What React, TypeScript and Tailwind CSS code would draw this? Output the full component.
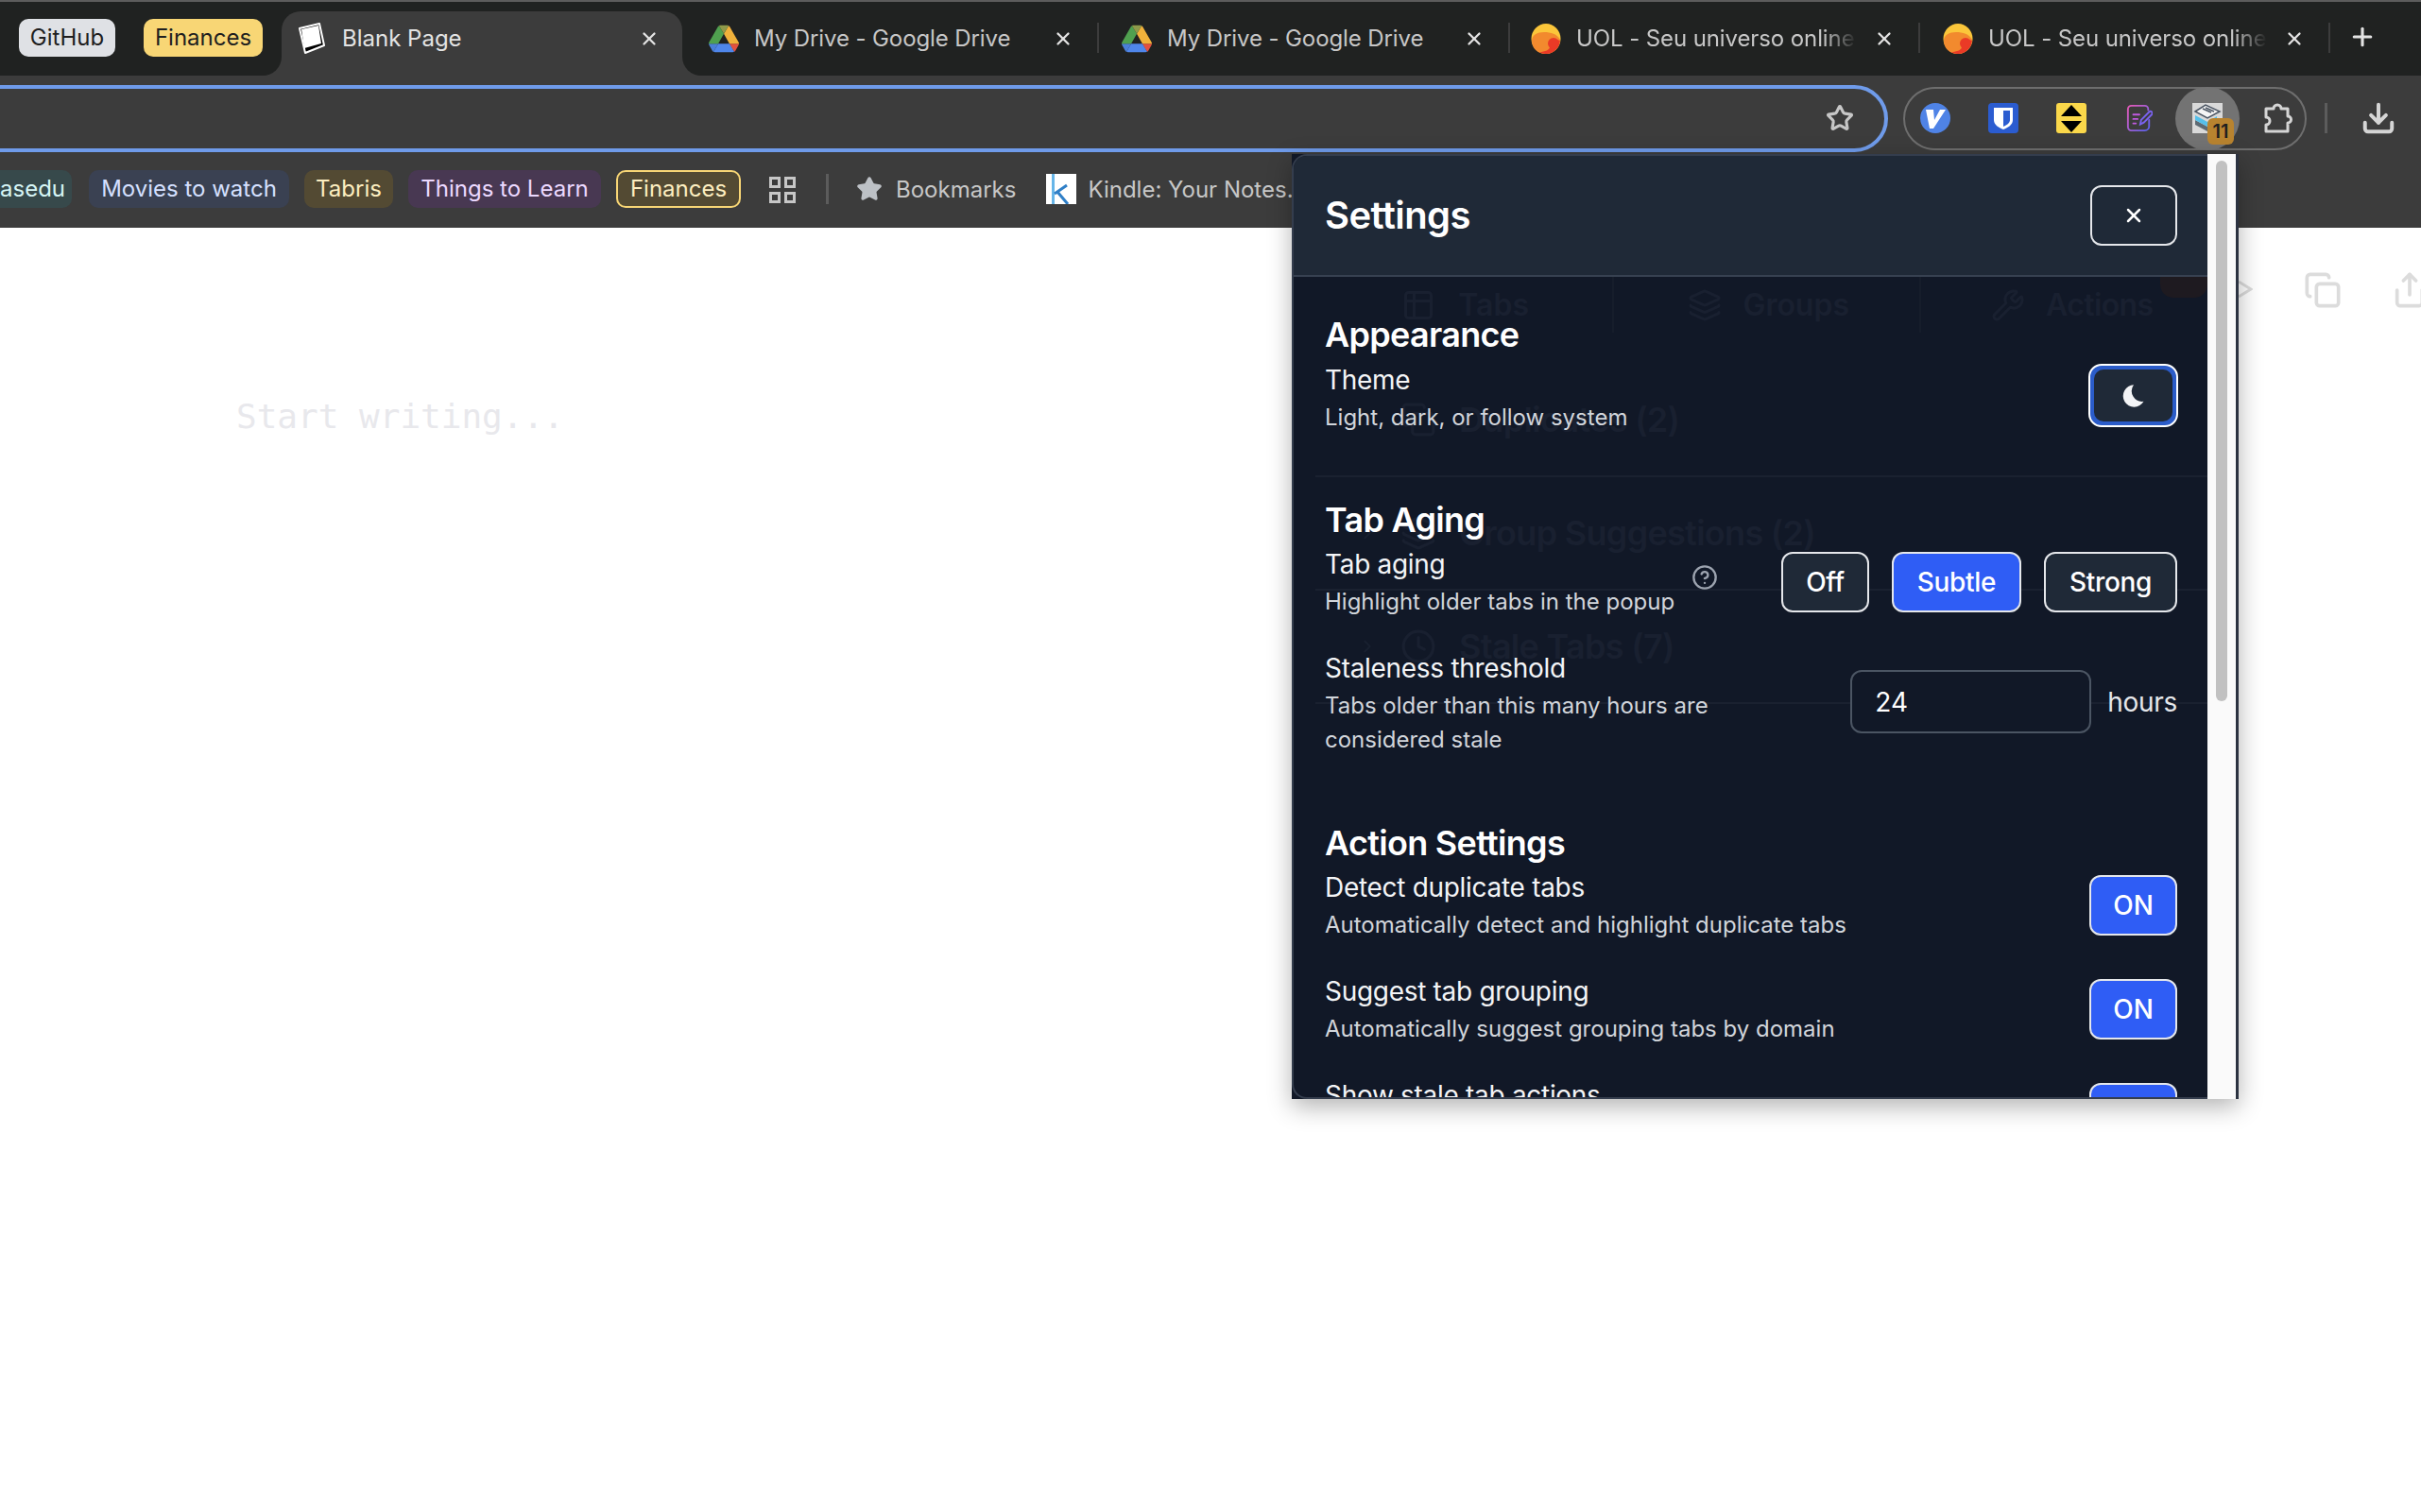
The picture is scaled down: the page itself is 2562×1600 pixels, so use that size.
import { ChevronRight, CircleHelp, Clock, Copy, Download, Layers, Plus, Share, Star, Table2, Wrench, X } from "lucide-react";

const tabs = [
  { title: "My Drive - Google Drive", icon: "drive", width: "w-[441px]", pad: "pl-[28px]" },
  { title: "My Drive - Google Drive", icon: "drive", width: "w-[435px]", pad: "pl-[24px]" },
  { title: "UOL - Seu universo online", icon: "uol", width: "w-[434px]", pad: "pl-[22px]" },
  { title: "UOL - Seu universo online", icon: "uol", width: "w-[434px]", pad: "pl-[24px]" },
];

function DriveIcon() {
  return (
    <svg viewBox="0 0 87.3 78" className="w-[32px] h-[30px] shrink-0">
      <path d="m6.6 66.85 3.85 6.65c.8 1.4 1.95 2.5 3.3 3.3l13.75-23.8h-27.5c0 1.55.4 3.1 1.2 4.5z" fill="#4a7fd8" />
      <path d="m43.65 25-13.75-23.8c-1.35.8-2.5 1.9-3.3 3.3l-25.4 44a9.06 9.06 0 0 0 -1.2 4.5h27.5z" fill="#4fa04f" />
      <path d="m73.55 76.8c1.35-.8 2.5-1.9 3.3-3.3l1.6-2.75 7.65-13.25c.8-1.4 1.2-2.95 1.2-4.5h-27.502l5.852 11.5z" fill="#e2503f" />
      <path d="m59.8 53h-32.3l-13.75 23.8c1.35.8 2.9 1.2 4.5 1.2h50.8c1.6 0 3.15-.45 4.5-1.2z" fill="#4f86ea" />
      <path d="m73.4 26.5-12.7-22c-.8-1.4-1.95-2.5-3.3-3.3l-13.75 23.8 16.15 28h27.45c0-1.55-.4-3.1-1.2-4.5z" fill="#f0b13b" />
      <path d="m43.65 25 13.75-23.8c-1.35-.8-2.9-1.2-4.5-1.2h-18.5c-1.6 0-3.15.45-4.5 1.2z" fill="#8f9a4a" />
    </svg>
  );
}

function UolIcon() {
  return (
    <svg viewBox="0 0 32 32" className="w-[32px] h-[32px] shrink-0">
      <ellipse cx="16" cy="16" rx="15.5" ry="16" fill="#fbc63a" />
      <path d="M1 18c0-6 6-9 13-9 7 0 14 2 17 8-1 8-7 15-15 15-9 0-15-6-15-14z" fill="#f28a2e" />
      <path d="M9 30c6 0 11-2 12-7 1-4 5-7 10-5-1 8-7 14-15 14-3 0-5-1-7-2z" fill="#ea3a26" />
      <circle cx="24" cy="21" r="6" fill="#ea3a26" />
    </svg>
  );
}

function TabIcon({ icon }: { icon: string }) {
  return icon === "drive" ? <DriveIcon /> : <UolIcon />;
}

function PageIcon() {
  return (
    <svg viewBox="0 0 30 34" className="w-[30px] h-[34px] shrink-0">
      <path d="M3 6 24 1l5 23-20 8z" fill="#000" stroke="#fff" strokeWidth="2" strokeLinejoin="round" />
      <path d="M5 7 23 3l3 19-18 5z" fill="#fff" />
    </svg>
  );
}

function KindleIcon() {
  return (
    <svg viewBox="0 0 32 32" className="w-[32px] h-[32px] shrink-0">
      <rect width="32" height="32" fill="#fff" />
      <path d="M6 0h3v32H6z" fill="#66b5e8" />
      <path d="M9 21 22 12M12 19l11 13" stroke="#2f7fc7" strokeWidth="3" fill="none" />
    </svg>
  );
}

function VIcon() {
  return (
    <svg viewBox="0 0 32 32" className="w-[32px] h-[32px]">
      <ellipse cx="16" cy="16" rx="16" ry="16" fill="#4f83e6" />
      <path d="M6 7h8l1 11 6-11h6L14 27h-4z" fill="#fff" />
    </svg>
  );
}

function ShieldIcon() {
  return (
    <svg viewBox="0 0 32 32" className="w-[32px] h-[32px]">
      <rect width="32" height="32" rx="4" fill="#2b5cd0" />
      <path d="M6 5h20v13c0 5-5 8-10 10-5-2-10-5-10-10z" fill="#fff" />
      <path d="M16 8h7v10c0 3-3 5-7 7z" fill="#2b5cd0" />
    </svg>
  );
}

function ArrowsIcon() {
  return (
    <svg viewBox="0 0 32 32" className="w-[32px] h-[32px]">
      <rect width="32" height="32" rx="3" fill="#fbd84a" />
      <path d="M16 2 27 14H5z" fill="#000" />
      <path d="M5 19h22L16 31z" fill="#000" />
    </svg>
  );
}

function NoteIcon() {
  return (
    <svg viewBox="0 0 30 32" className="w-[28px] h-[32px]" fill="none" strokeWidth="2" strokeLinecap="round">
      <defs>
        <linearGradient id="note" x1="0" y1="0" x2="1" y2="1">
          <stop offset="0" stopColor="#e85ab8" />
          <stop offset="1" stopColor="#5a63f0" />
        </linearGradient>
      </defs>
      <path d="M25 7V6a4 4 0 0 0-4-4H6a4 4 0 0 0-4 4v20a4 4 0 0 0 4 4h15a5 5 0 0 0 5-5v-7" stroke="url(#note)" />
      <path d="M8 12h7M8 17h5M8 22h3" stroke="#c05ae0" />
      <path d="M16 23l1-5 9-9a2 2 0 0 1 3 3l-9 9z" stroke="#7a62f0" />
    </svg>
  );
}

function StackIcon() {
  return (
    <svg viewBox="0 0 32 32" className="w-[32px] h-[32px]">
      <rect width="32" height="32" fill="#d9d9d9" />
      <path d="M3 18 16 25 24 20 24 25 16 30 3 23z" fill="#5d6a73" />
      <path d="M3 13 16 20 26 14 26 19 16 25 3 18z" fill="#55c0ea" />
      <path d="M3 9 14 2 29 9 16 16z" fill="#f5f5f5" stroke="#4b5563" strokeWidth="1.5" />
      <path d="M11 6 20 10M14 5 23 9" stroke="#4b5563" strokeWidth="1.5" />
    </svg>
  );
}

function PuzzleIcon() {
  return (
    <svg viewBox="0 0 32 34" className="w-[32px] h-[34px]" fill="none" stroke="#d5d5d5" strokeWidth="3" strokeLinejoin="round">
      <path d="M4 7h8a4 4 0 0 1 8 0h7v8a3.5 3.5 0 0 1 0 7v9H4v-7a4 4 0 0 0 0-8z" />
    </svg>
  );
}

function GridIcon() {
  return (
    <svg viewBox="0 0 28 28" className="w-[28px] h-[28px] shrink-0" fill="none" stroke="#c7c7c7" strokeWidth="3">
      <rect x="1.5" y="1.5" width="9" height="9" />
      <rect x="17.5" y="1.5" width="9" height="9" />
      <rect x="1.5" y="17.5" width="9" height="9" />
      <rect x="17.5" y="17.5" width="9" height="9" />
    </svg>
  );
}

function MoonIcon() {
  return (
    <svg viewBox="0 0 24 24" className="w-[28px] h-[28px]" fill="#f3f4f6">
      <path d="M12 2A10 10 0 1 0 21 17 9.5 9.5 0 0 1 12 2z" />
    </svg>
  );
}

function Row({ label, desc }: { label: string; desc: string }) {
  return (
    <div>
      <div className="text-[28px] leading-[40px] tracking-[-0.3px] text-[#f3f4f6]">{label}</div>
      <div className="mt-[2px] text-[24px] leading-[36px] text-[#d1d5db]">{desc}</div>
    </div>
  );
}

function OnRow({ label, desc }: { label: string; desc: string }) {
  return (
    <div className="flex items-center justify-between">
      <Row label={label} desc={desc} />
      <button className="w-[93px] h-[64px] rounded-[12px] border-2 border-[#e5e7eb] bg-[#2f5df5] text-[28px] font-medium text-white">
        ON
      </button>
    </div>
  );
}

function GhostRow({ title, icon }: { title: string; icon: React.ReactNode }) {
  return (
    <div className="h-[120px] ml-[23px] border-b-2 border-[#1a2130] flex items-center gap-[24px] pl-[44px] text-[36px] tracking-[-0.7px] font-semibold text-[#192030]">
      <ChevronRight size={22} />
      {icon}
      {title}
    </div>
  );
}

function Settings() {
  return (
    <div className="absolute left-[1367px] top-[163px] w-[1002px] h-[1000px] bg-[#111827] flex border-r-[3px] border-[#2c3341] shadow-[0_8px_24px_rgba(0,0,0,0.3)]">
      <div className="flex-1 flex flex-col min-w-0 rounded-l-[16px] border-y-2 border-l-2 border-[#343d4d] overflow-hidden">
        <div className="relative z-10 h-[128px] shrink-0 bg-[#1f2937] border-b-2 border-[#374151] flex items-center justify-between pl-[33px] pr-[32px]">
          <h1 className="text-[40px] tracking-[-0.6px] font-semibold text-white">Settings</h1>
          <button className="w-[92px] h-[64px] rounded-[12px] border-2 border-[#e5e7eb] flex items-center justify-center text-white">
            <X size={24} strokeWidth={2.5} />
          </button>
        </div>

        <div className="relative flex-1 overflow-hidden">
          <div className="absolute inset-0 flex flex-col">
            <div className="h-[67px] shrink-0 flex pb-[8px] text-[32px] font-semibold text-[#192030]">
              <div className="w-[339px] flex items-center justify-end gap-[24px] pr-[88px] border-r-2 border-[#161d2b]">
                <Table2 size={36} />
                Tabs
              </div>
              <div className="w-[325px] flex items-center justify-end gap-[22px] pr-[74px] border-r-2 border-[#161d2b]">
                <Layers size={36} />
                Groups
              </div>
              <div className="relative flex-1 flex items-center gap-[22px] pl-[74px] tracking-[-0.6px]">
                <Wrench size={36} />
                Actions
                <span className="absolute right-0 -top-[14px] w-[50px] h-[36px] rounded-[14px] bg-[#1e1a20]" />
              </div>
            </div>
            <div className="h-[25px] shrink-0" />
            <GhostRow title="Duplicates (2)" icon={<Copy size={38} />} />
            <GhostRow title="Group Suggestions (2)" icon={<Layers size={38} />} />
            <GhostRow title="Stale Tabs (7)" icon={<Clock size={38} />} />
          </div>

          <div className="relative pt-[39px] pl-[33px] pr-[32px] flex flex-col">
            <section>
              <h2 className="text-[36px] leading-[44px] tracking-[-0.7px] font-semibold text-white mb-[6px]">Appearance</h2>
              <div className="flex items-center justify-between">
                <Row label="Theme" desc="Light, dark, or follow system" />
                <button className="mb-[5px] -mr-[1px] w-[95px] h-[67px] rounded-[14px] border-2 border-white bg-[#2b5cc9] p-[4px]">
                  <span className="w-full h-full rounded-[10px] bg-[#1f2937] flex items-center justify-center">
                    <MoonIcon />
                  </span>
                </button>
              </div>
            </section>

            <section className="mt-[68px]">
              <h2 className="text-[36px] leading-[44px] tracking-[-0.7px] font-semibold text-white mb-[5px]">Tab Aging</h2>
              <div className="flex flex-col gap-[32px]">
                <div className="flex items-center justify-between">
                  <div className="flex items-center gap-[18px]">
                    <Row label="Tab aging" desc="Highlight older tabs in the popup" />
                    <CircleHelp size={28} className="mb-[10px] text-[#9ca3af]" />
                  </div>
                  <div className="flex gap-[24px] text-[28px] font-medium tracking-[-0.3px] text-white">
                    <button className="w-[93px] h-[64px] rounded-[12px] border-2 border-[#e5e7eb] bg-[#1f2937]">Off</button>
                    <button className="w-[137px] h-[64px] rounded-[12px] border-2 border-[#e5e7eb] bg-[#2f5df5]">Subtle</button>
                    <button className="w-[141px] h-[64px] rounded-[12px] border-2 border-[#e5e7eb] bg-[#1f2937]">Strong</button>
                  </div>
                </div>
                <div className="flex items-center justify-between">
                  <div className="w-[460px]">
                    <Row label="Staleness threshold" desc="Tabs older than this many hours are considered stale" />
                  </div>
                  <div className="flex items-center gap-[17px] mb-[3px]">
                    <input
                      defaultValue="24"
                      className="w-[255px] h-[67px] rounded-[12px] border-2 border-[#4b5563] bg-[#111827] px-[24px] text-[28px] text-white outline-none"
                    />
                    <span className="text-[28px] tracking-[-0.3px] text-[#e5e7eb]">hours</span>
                  </div>
                </div>
              </div>
            </section>

            <section className="mt-[69px]">
              <h2 className="text-[36px] leading-[44px] tracking-[-0.7px] font-semibold text-white mb-[5px]">Action Settings</h2>
              <div className="flex flex-col gap-[32px]">
                <OnRow label="Detect duplicate tabs" desc="Automatically detect and highlight duplicate tabs" />
                <OnRow label="Suggest tab grouping" desc="Automatically suggest grouping tabs by domain" />
                <OnRow label="Show stale tab actions" desc="Show actions for stale tabs" />
              </div>
            </section>
          </div>
        </div>
      </div>
      <div className="w-[30px] shrink-0 bg-[#fafafa] px-[9px] pt-[7px]">
        <div className="h-[572px] rounded-full bg-[#c1c1c1]" />
      </div>
    </div>
  );
}

export default function App() {
  return (
    <div className="relative w-[2562px] h-[1600px] overflow-hidden bg-white font-['Inter',sans-serif]">
      <div className="h-[80px] bg-[#202221] border-t-2 border-[#5c5c5c] flex items-end pl-[20px] text-[24px]">
        <div className="self-start mt-[18px] h-[40px] w-[102px] rounded-[10px] bg-[#dfe1e5] text-[#1f1f1f] flex items-center justify-center">
          GitHub
        </div>
        <div className="self-start mt-[18px] ml-[30px] h-[40px] w-[126px] rounded-[10px] bg-[#f8d675] text-[#1f1f1f] flex items-center justify-center">
          Finances
        </div>
        <div className="relative ml-[20px] w-[424px] h-[68px] rounded-t-[20px] bg-[#3c3c3c] flex items-center pl-[16px] pr-[24px] pb-[10px] text-[#e3e3e3]">
          <span className="absolute bottom-0 -left-[20px] w-[20px] h-[20px] bg-[#3c3c3c]">
            <span className="block w-full h-full rounded-br-[20px] bg-[#202221]" />
          </span>
          <span className="absolute bottom-0 -right-[20px] w-[20px] h-[20px] bg-[#3c3c3c]">
            <span className="block w-full h-full rounded-bl-[20px] bg-[#202221]" />
          </span>
          <PageIcon />
          <span className="ml-[18px] flex-1">Blank Page</span>
          <X size={22} strokeWidth={2.5} />
        </div>
        {tabs.map((tab, i) => (
          <div key={i} className={`${tab.width} ${tab.pad} relative h-[68px] flex items-center pr-[27px] pb-[10px] tracking-[-0.1px] text-[#c7c7c7]`}>
            <TabIcon icon={tab.icon} />
            <span className={`ml-[16px] flex-1 min-w-0 whitespace-nowrap overflow-hidden ${tab.icon === "uol" ? "[mask-image:linear-gradient(to_right,black_88%,transparent)]" : ""}`}>
              {tab.title}
            </span>
            <X size={22} strokeWidth={2.5} className="ml-[18px] shrink-0 text-[#e3e3e3]" />
            <span className="absolute right-0 top-[12px] w-[2px] h-[32px] bg-[#3c3c3c]" />
          </div>
        ))}
        <Plus size={30} strokeWidth={2.5} className="self-start mt-[22px] ml-[19px] text-[#e3e3e3]" />
      </div>

      <div className="h-[161px] bg-[#3c3c3c]">
        <div className="h-[90px] flex items-center">
          <div className="-ml-[60px] w-[2058px] h-[71px] rounded-full border-4 border-[#6f9bea] flex items-center justify-end pr-[32px] text-[#c7c7c7]">
            <Star size={30} strokeWidth={2.5} />
          </div>
          <div className="ml-[16px] w-[427px] h-[67px] rounded-full border-2 border-[#6e6e6e] flex items-center pl-[16px] text-[#d5d5d5]">
            <VIcon />
            <div className="ml-[40px]"><ShieldIcon /></div>
            <div className="ml-[40px]"><ArrowsIcon /></div>
            <div className="ml-[42px]"><NoteIcon /></div>
            <div className="relative ml-[24px] w-[68px] h-[67px] rounded-full bg-[#737373] flex items-center justify-center">
              <StackIcon />
              <span className="absolute left-[34px] top-[33px] w-[28px] h-[28px] rounded-[6px] bg-[#b8832f] text-[#1f1f1f] text-[20px] font-semibold flex items-center justify-center">
                11
              </span>
            </div>
            <div className="ml-[24px]"><PuzzleIcon /></div>
          </div>
          <span className="ml-[19px] w-[3px] h-[32px] bg-[#5c5c5c]" />
          <Download size={38} strokeWidth={2.5} className="ml-[35px] text-[#d5d5d5]" />
        </div>

        <div className="pt-[10px] flex items-start text-[24px] whitespace-nowrap">
          <div className="-ml-[12px] h-[40px] w-[88px] rounded-[10px] bg-[#37494b] text-[#d6f5f5] flex items-center pl-[12px]">asedu</div>
          <div className="ml-[18px] h-[40px] w-[212px] rounded-[10px] bg-[#3a4152] text-[#d5e0ff] flex items-center justify-center">Movies to watch</div>
          <div className="ml-[16px] h-[40px] w-[94px] rounded-[10px] bg-[#534a33] text-[#fdeec0] flex items-center justify-center">Tabris</div>
          <div className="ml-[16px] h-[40px] w-[204px] rounded-[10px] bg-[#483852] text-[#ecd9ff] flex items-center justify-center">Things to Learn</div>
          <div className="ml-[16px] h-[40px] w-[132px] rounded-[10px] border-2 border-[#f8d675] bg-[#534a33] text-[#fdeec0] flex items-center justify-center">Finances</div>
          <div className="ml-[30px] mt-[7px]"><GridIcon /></div>
          <span className="ml-[32px] mt-[4px] w-[3px] h-[32px] bg-[#5c5c5c]" />
          <Star size={28} fill="#bdc1c6" stroke="#bdc1c6" className="ml-[29px] mt-[6px] shrink-0" />
          <span className="ml-[14px] mt-[3px] text-[#c7c7c7]">Bookmarks</span>
          <div className="ml-[32px] mt-[4px]"><KindleIcon /></div>
          <span className="ml-[12px] mt-[3px] text-[#c7c7c7]">Kindle: Your Notes...</span>
        </div>
      </div>

      <div className="relative">
        <div className="absolute left-[250px] top-[178px] text-[36px] leading-[44px] text-[#e8e8ec] font-['DejaVu_Sans_Mono',monospace]">
          Start writing...
        </div>
        <div className="absolute right-[84px] top-[46px] text-[#dcdcdc]">
          <Copy size={40} strokeWidth={2.2} />
        </div>
        <div className="absolute -right-[8px] top-[46px] text-[#dcdcdc]">
          <Share size={40} strokeWidth={2.2} />
        </div>
        <svg viewBox="0 0 16 20" className="absolute left-[2368px] top-[55px] w-[16px] h-[20px]" fill="none" stroke="#dcdcdc" strokeWidth="3">
          <path d="M1 2 14 10 1 18" />
        </svg>
      </div>

      <Settings />
    </div>
  );
}
